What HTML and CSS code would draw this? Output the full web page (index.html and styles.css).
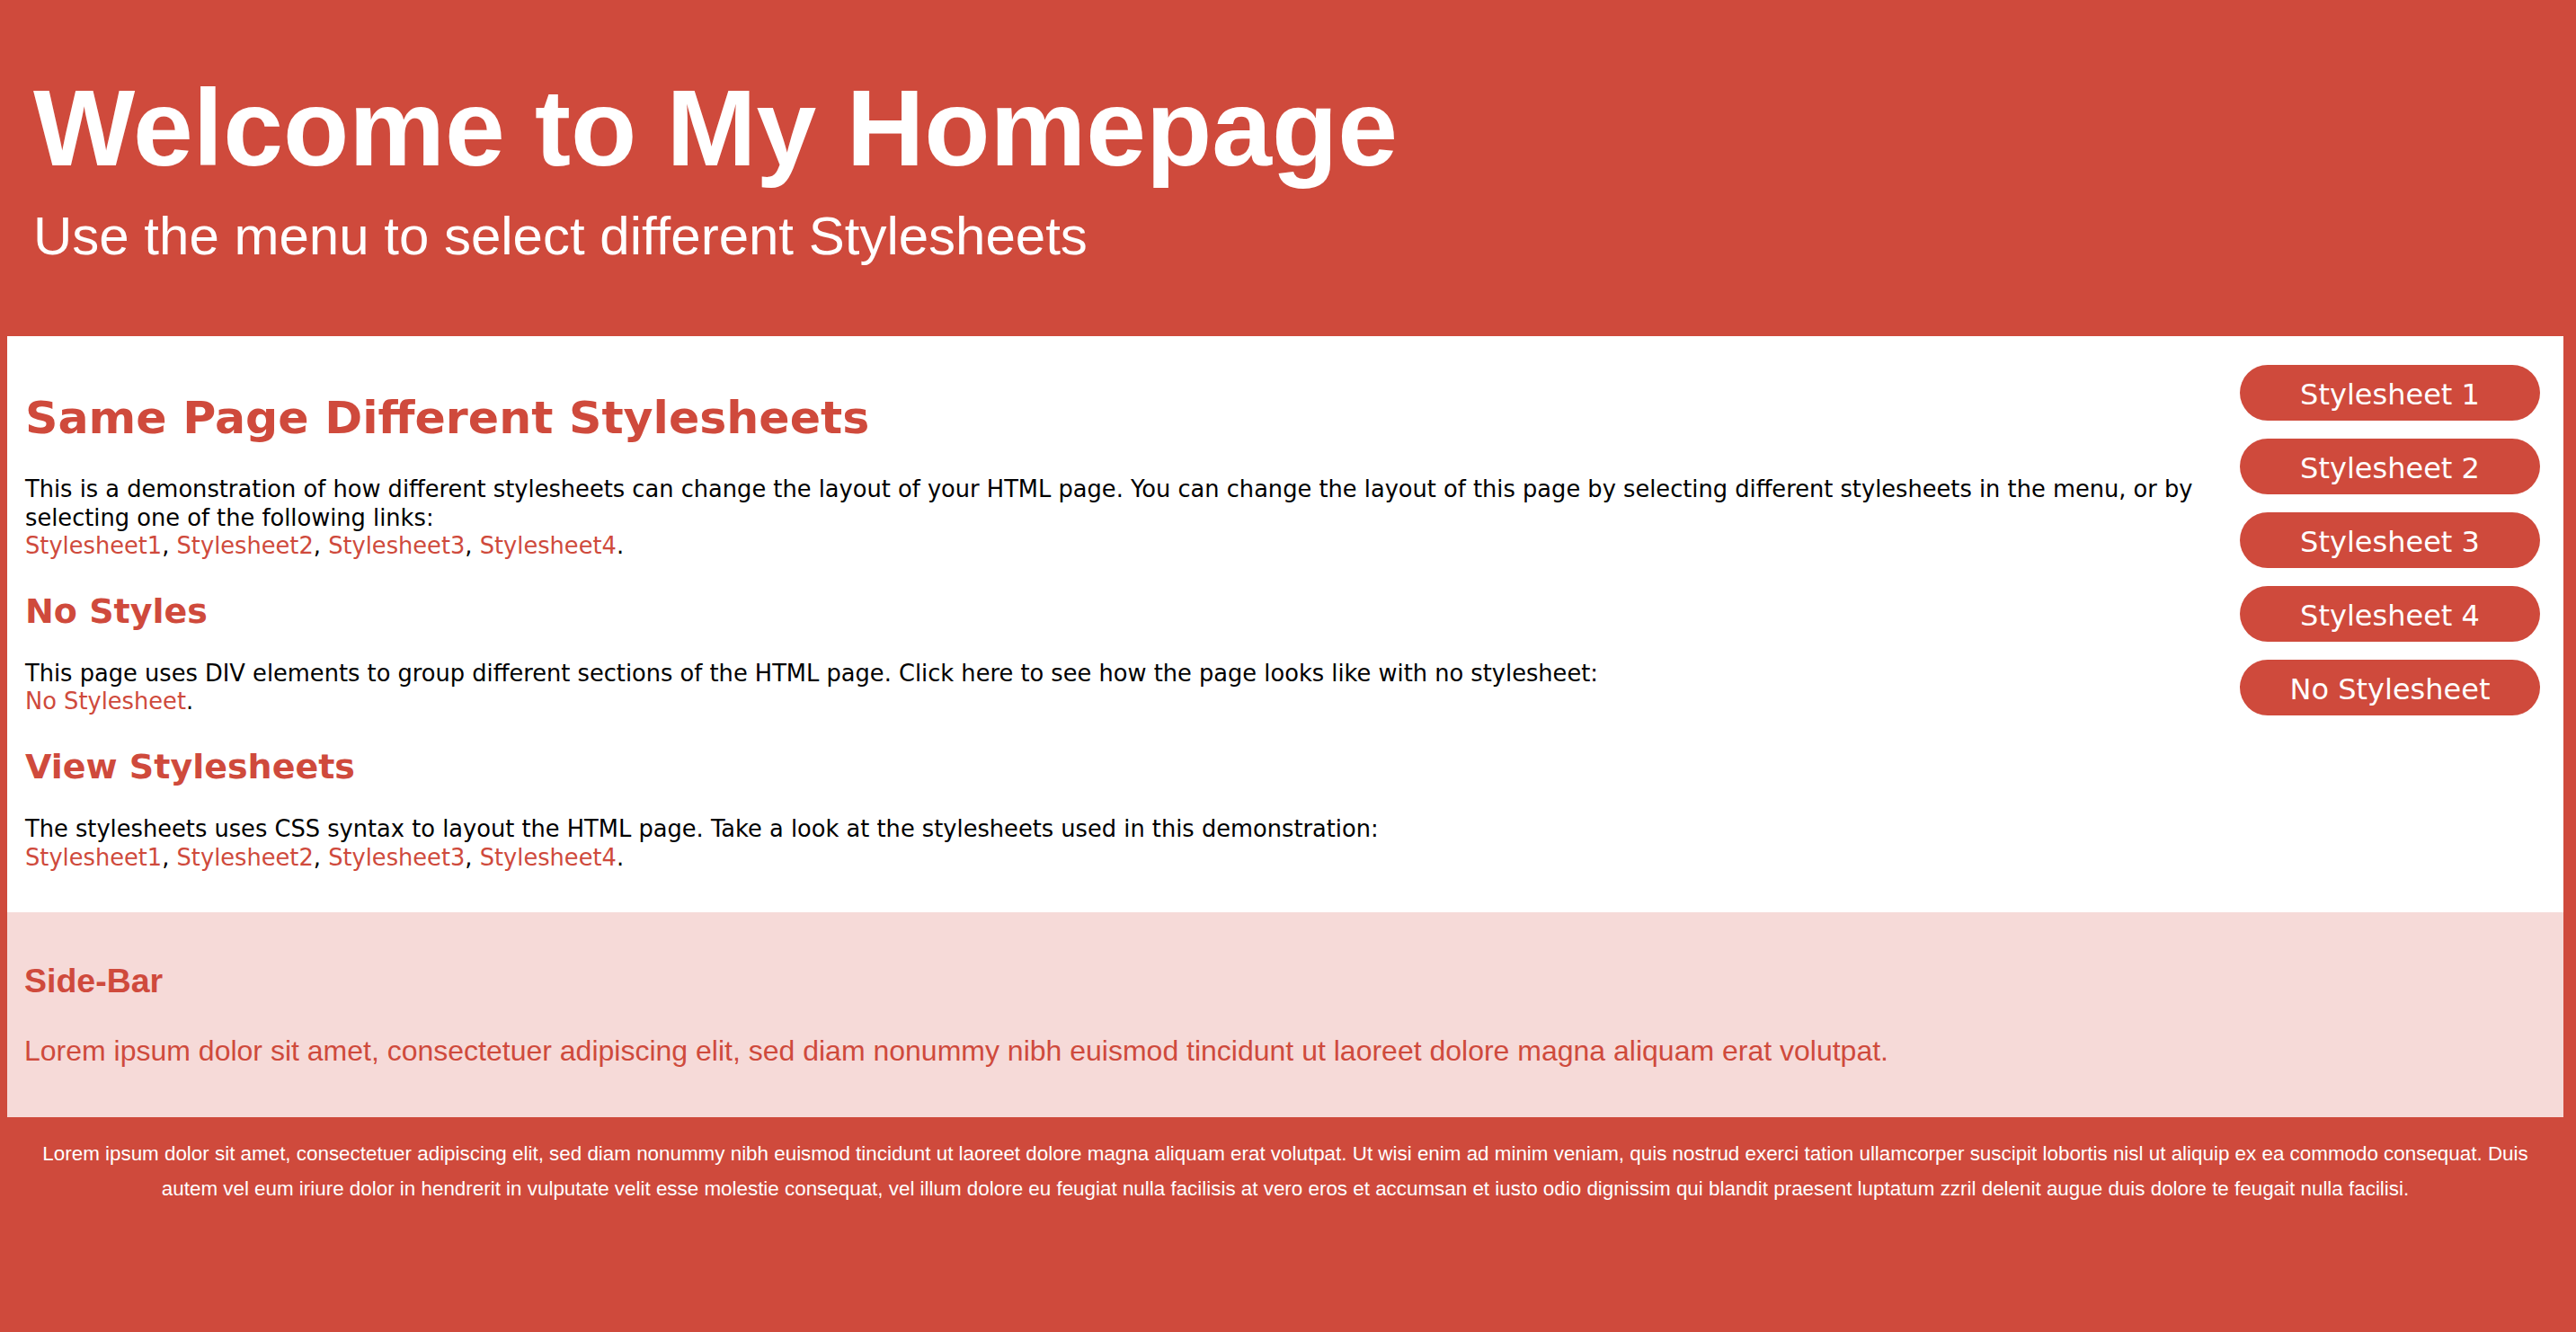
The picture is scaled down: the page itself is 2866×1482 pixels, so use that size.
FILE: index.html
```html
<!DOCTYPE html>
<html lang="en">
<head>
<meta charset="utf-8">
<title>Welcome to My Homepage</title>
<link rel="stylesheet" href="styles.css">
</head>
<body>
<div class="header">
  <h1 class="title">Welcome to My Homepage</h1>
  <h2 class="subtitle">Use the menu to select different Stylesheets</h2>
</div>
<div class="content">
  <div class="main">
    <h2 class="main-title">Same Page Different Stylesheets</h2>
    <p class="text">This is a demonstration of how different stylesheets can change the layout of your HTML page. You can change the layout of this page by selecting different stylesheets in the menu, or by selecting one of the following links:<br><a href="#">Stylesheet1</a>, <a href="#">Stylesheet2</a>, <a href="#">Stylesheet3</a>, <a href="#">Stylesheet4</a>.</p>
    <h3 class="sub-title">No Styles</h3>
    <p class="text">This page uses DIV elements to group different sections of the HTML page. Click here to see how the page looks like with no stylesheet:<br><a href="#">No Stylesheet</a>.</p>
    <h3 class="sub-title">View Stylesheets</h3>
    <p class="text last">The stylesheets uses CSS syntax to layout the HTML page. Take a look at the stylesheets used in this demonstration:<br><a href="#">Stylesheet1</a>, <a href="#">Stylesheet2</a>, <a href="#">Stylesheet3</a>, <a href="#">Stylesheet4</a>.</p>
  </div>
  <div class="menu">
    <a class="btn" href="#">Stylesheet 1</a>
    <a class="btn" href="#">Stylesheet 2</a>
    <a class="btn" href="#">Stylesheet 3</a>
    <a class="btn" href="#">Stylesheet 4</a>
    <a class="btn" href="#">No Stylesheet</a>
  </div>
</div>
<div class="sidebar">
  <h3 class="sidebar-title">Side-Bar</h3>
  <p class="sidebar-text">Lorem ipsum dolor sit amet, consectetuer adipiscing elit, sed diam nonummy nibh euismod tincidunt ut laoreet dolore magna aliquam erat volutpat.</p>
</div>
<div class="footer">
  <p class="footer-text">Lorem ipsum dolor sit amet, consectetuer adipiscing elit, sed diam nonummy nibh euismod tincidunt ut laoreet dolore magna aliquam erat volutpat. Ut wisi enim ad minim veniam, quis nostrud exerci tation ullamcorper suscipit lobortis nisl ut aliquip ex ea commodo consequat. Duis autem vel eum iriure dolor in hendrerit in vulputate velit esse molestie consequat, vel illum dolore eu feugiat nulla facilisis at vero eros et accumsan et iusto odio dignissim qui blandit praesent luptatum zzril delenit augue duis dolore te feugait nulla facilisi.</p>
</div>
</body>
</html>
```

FILE: styles.css
```css
html, body {
  margin: 0;
  padding: 0;
}

body {
  background: #cf4a3c;
  min-height: 1482px;
  font-family: "Liberation Sans", Arial, sans-serif;
}

.header {
  padding: 73px 37px 76px 37px;
  color: #ffffff;
}

.title {
  margin: 0;
  font-size: 120px;
  line-height: 138px;
  font-weight: bold;
}

.subtitle {
  margin: 17px 0 0 0;
  font-size: 60px;
  line-height: 70px;
  font-weight: normal;
}

.content {
  display: flex;
  background: #ffffff;
  margin: 0 14px 0 8px;
  font-family: "DejaVu Sans", Verdana, sans-serif;
}

.main {
  flex: 1;
  padding: 61px 10px 45px 20px;
}

.main-title {
  margin: 0 0 34px 0;
  font-size: 50.6px;
  line-height: 60px;
  font-weight: bold;
  color: #cf4a3c;
}

.sub-title {
  margin: 0 0 31px 0;
  font-size: 38px;
  line-height: 46px;
  font-weight: bold;
  color: #cf4a3c;
}

.text {
  margin: 0 0 33px 0;
  font-size: 25.7px;
  line-height: 31.6px;
  color: #000000;
}

.text.last {
  margin-bottom: 0;
}

.text a {
  color: #cf4a3c;
  text-decoration: none;
}

.menu {
  width: 334px;
  margin-right: 26px;
  padding-top: 32px;
  display: flex;
  flex-direction: column;
  gap: 20px;
}

.btn {
  display: flex;
  align-items: center;
  justify-content: center;
  height: 62px;
  padding-top: 3px;
  box-sizing: border-box;
  border-radius: 31px;
  background: #cf4a3c;
  color: #ffffff;
  font-size: 32px;
  text-decoration: none;
}

.sidebar {
  background: #f6dad8;
  margin: 0 14px 0 8px;
  padding: 55px 19px 55px 19px;
  color: #cf4a3c;
}

.sidebar-title {
  margin: 0 0 38px 0;
  font-size: 37.5px;
  line-height: 43px;
  font-weight: bold;
}

.sidebar-text {
  margin: 0;
  font-size: 32px;
  line-height: 37px;
}

.footer {
  margin: 0 14px 0 8px;
  padding: 21px 20px 0 20px;
  color: #ffffff;
  text-align: center;
}

.footer-text {
  margin: 0;
  font-size: 22.4px;
  line-height: 39px;
}
```
